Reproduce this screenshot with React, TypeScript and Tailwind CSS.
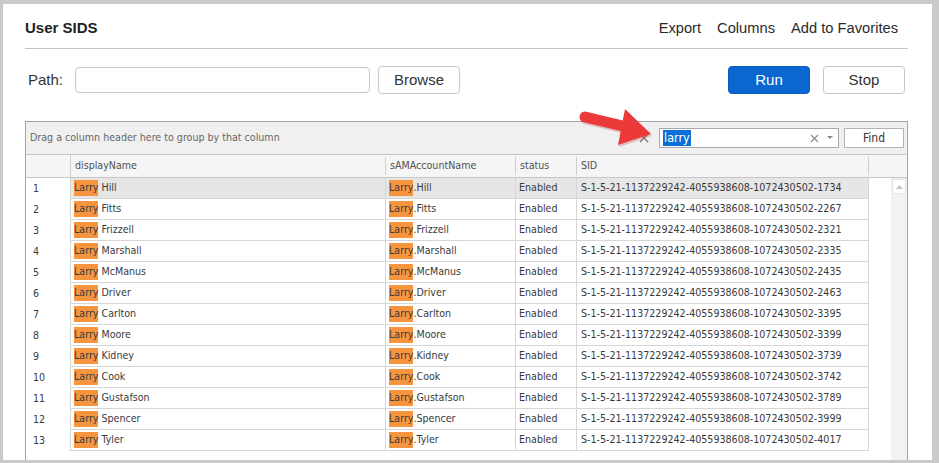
import React from "react";

const rows: [string, string][] = [
  ["Hill", "1734"],
  ["Fitts", "2267"],
  ["Frizzell", "2321"],
  ["Marshall", "2335"],
  ["McManus", "2435"],
  ["Driver", "2463"],
  ["Carlton", "3395"],
  ["Moore", "3399"],
  ["Kidney", "3739"],
  ["Cook", "3742"],
  ["Gustafson", "3789"],
  ["Spencer", "3999"],
  ["Tyler", "4017"],
];

const gridFont = {
  fontFamily: '"DejaVu Sans Condensed", "Liberation Sans", sans-serif',
};

function Hl() {
  return <span className="bg-[#f7953f] text-[#3a3a3a]">Larry</span>;
}

function HeaderCell({ w, label }: { w: string; label: string }) {
  return (
    <div className={`${w} flex items-center justify-between pl-[4px] h-full`}>
      <span>{label}</span>
      <div className="w-px h-[18px] bg-[#cfcfcf]" />
    </div>
  );
}

export default function App() {
  return (
    <div
      className="relative w-[939px] h-[463px] bg-[#c9c9c9] pt-[4px] pl-[3px] pr-[7px] pb-[3px] overflow-hidden"
      style={{ fontFamily: '"Liberation Sans", Arial, sans-serif' }}
    >
      <div className="bg-white h-full overflow-hidden pl-[22px] pr-[24px]">
        {/* Title bar */}
        <div className="h-[45px] pt-[5px] flex items-center justify-between border-b border-[#c4c4c4]">
          <div className="text-[15px] font-bold text-[#222]">User SIDS</div>
          <div className="flex items-center gap-[16px] pr-[10px] text-[14.7px] text-[#2a2a2a]">
            <span>Export</span>
            <span>Columns</span>
            <span>Add to Favorites</span>
          </div>
        </div>

        {/* Path row */}
        <div className="mt-[17px] h-[28px] flex items-center">
          <span className="ml-[3px] text-[15px] text-[#333]">Path:</span>
          <div className="ml-[12px] w-[295px] h-[26px] border border-[#c8c8c8] rounded-[4px]" />
          <button className="ml-[8px] w-[82px] h-[28px] border border-[#c8c8c8] rounded-[4px] bg-white text-[15px] text-[#333]">
            Browse
          </button>
          <div className="flex-1" />
          <button className="w-[82px] h-[28px] rounded-[4px] bg-[#0b66d0] border border-[#0a5cbd] text-[15px] text-white">
            Run
          </button>
          <button className="ml-[13px] mr-[3px] w-[82px] h-[28px] border border-[#c8c8c8] rounded-[4px] bg-white text-[15px] text-[#333]">
            Stop
          </button>
        </div>

        {/* Grid */}
        <div
          className="mt-[27px] border border-[#a3a3a3] text-[10.6px] text-[#3a3a3a]"
          style={gridFont}
        >
          {/* group panel */}
          <div className="h-[33px] bg-[#f0f0f0] border-b border-[#c6c6c6] flex items-center pl-[4px] pr-[3px]">
            <span className="text-[#666]">Drag a column header here to group by that column</span>
            <div className="flex-1" />
            <svg width="10" height="10" viewBox="0 0 10 10" className="mr-[10px]">
              <path d="M1 1 L9 9 M9 1 L1 9" stroke="#777" strokeWidth="1.2" />
            </svg>
            <div className="w-[180px] h-[20px] bg-white border border-[#a8a8a8] flex items-center pl-[3px] pr-[5px]">
              <span className="relative bg-[#0a6fd6] text-white px-[1px] leading-[16px] text-[12.5px]">
                larry
              </span>
              <div className="flex-1" />
              <svg width="9" height="9" viewBox="0 0 9 9">
                <path d="M1 1 L8 8 M8 1 L1 8" stroke="#888" strokeWidth="1.1" />
              </svg>
              <svg width="6" height="4" viewBox="0 0 6 4" className="ml-[8px]">
                <path d="M0 0 L6 0 L3 3 Z" fill="#888" />
              </svg>
            </div>
            <button className="ml-[5px] w-[60px] h-[20px] bg-white border border-[#b4b4b4] text-[12px] text-[#333]">
              Find
            </button>
          </div>

          {/* header row */}
          <div className="h-[23px] bg-[#f5f5f5] border-b border-[#c6c6c6] flex text-[#505050]">
            <div className="w-[45px] h-full border-r border-[#d0d0d0]" />
            <HeaderCell w="w-[315px]" label="displayName" />
            <HeaderCell w="w-[130px]" label="sAMAccountName" />
            <HeaderCell w="w-[61px]" label="status" />
            <HeaderCell w="w-[292px]" label="SID" />
          </div>

          {/* body */}
          <div className="flex h-[320px]">
            <div className="flex flex-col">
              {rows.map(([name, id], i) => {
                const bg = i === 0 ? "bg-[#e6e6e6]" : "bg-white";
                return (
                  <div key={i} className="flex h-[21px]">
                    <div className="w-[44px] pl-[7px] flex items-center">{i + 1}</div>
                    <div className={`w-[316px] border-l border-r border-b border-[#d6d6d6] ${bg} flex items-center pl-[3px]`}>
                      <Hl />
                      <span>&nbsp;{name}</span>
                    </div>
                    <div className={`w-[130px] border-r border-b border-[#d6d6d6] ${bg} flex items-center pl-[3px]`}>
                      <Hl />
                      <span>.{name}</span>
                    </div>
                    <div className={`w-[61px] border-r border-b border-[#d6d6d6] ${bg} flex items-center pl-[3px]`}>
                      Enabled
                    </div>
                    <div className={`w-[292px] border-r border-b border-[#d6d6d6] ${bg} flex items-center pl-[4px]`}>
                      S-1-5-21-1137229242-4055938608-1072430502-{id}
                    </div>
                  </div>
                );
              })}
            </div>
            <div className="flex-1" />
            <div className="w-[16px] h-full bg-[#f2f2f2] pt-[1px] px-[1px]">
              <div className="h-[15px] bg-white border border-[#e4e4e4] flex items-center justify-center">
                <svg width="7" height="4" viewBox="0 0 7 4">
                  <path d="M0 4 L7 4 L3.5 0 Z" fill="#c4c4c4" />
                </svg>
              </div>
            </div>
          </div>
        </div>
      </div>

      {/* Red annotation arrow */}
      <svg
        className="absolute left-[575px] top-[100px]"
        width="85"
        height="50"
        viewBox="0 0 85 50"
      >
        <line x1="10" y1="17" x2="52" y2="27" stroke="#b02a2a" strokeOpacity="0.25" strokeWidth="11" strokeLinecap="round" transform="translate(1,2)" />
        <polygon points="50,9 76,34 43,45" fill="#b02a2a" fillOpacity="0.25" transform="translate(1,2)" />
        <line x1="10" y1="17" x2="52" y2="27" stroke="#ec3a3a" strokeWidth="11" strokeLinecap="round" />
        <polygon points="50,9 76,34 43,45" fill="#ec3a3a" />
      </svg>
    </div>
  );
}
